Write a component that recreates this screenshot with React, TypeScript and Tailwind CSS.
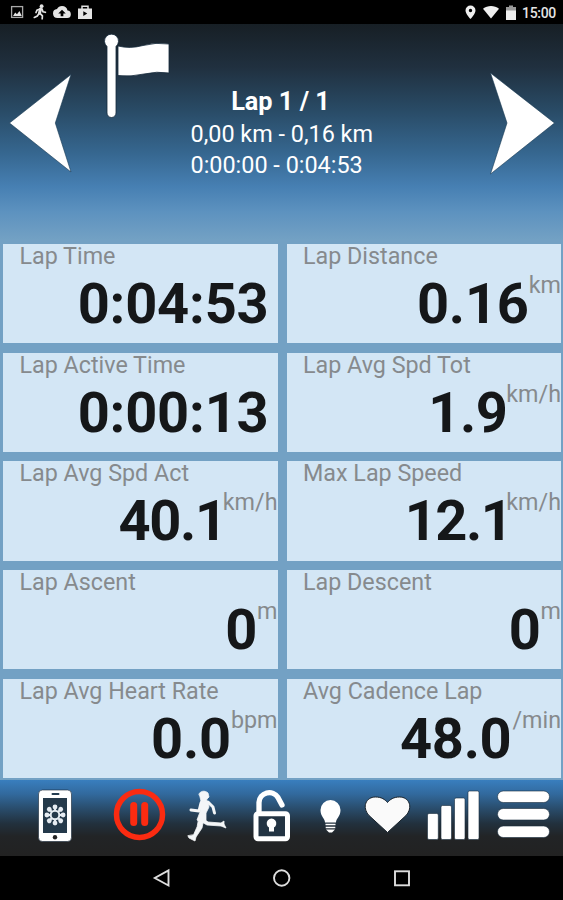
import React from "react";

type Metric = { label: string; value: string; unit?: string; fit?: string };

const metrics: Metric[] = [
  { label: "Lap Time", value: "0:04:53" },
  { label: "Lap Distance", value: "0.16", unit: "km" },
  { label: "Lap Active Time", value: "0:00:13" },
  { label: "Lap Avg Spd Tot", value: "1.9", unit: "km/h", fit: "-mr-[1px] tracking-[-0.5px]" },
  { label: "Lap Avg Spd Act", value: "40.1", unit: "km/h", fit: "-mr-[3px] tracking-[-1.3px]" },
  { label: "Max Lap Speed", value: "12.1", unit: "km/h", fit: "-mr-[5px] tracking-[-1.5px]" },
  { label: "Lap Ascent", value: "0", unit: "m" },
  { label: "Lap Descent", value: "0", unit: "m" },
  { label: "Lap Avg Heart Rate", value: "0.0", unit: "bpm" },
  { label: "Avg Cadence Lap", value: "48.0", unit: "/min", fit: "mr-[1px] tracking-[-0.3px]" },
];

function StatusBar() {
  return (
    <div className="flex h-6 items-center justify-between bg-black pl-[10px] pr-[7px] text-[#e4e4e4]">
      <div className="flex items-center">
        <svg className="h-[14px] w-[14px]" viewBox="0 0 14 14">
          <rect x="1.6" y="1.6" width="11" height="10.8" fill="none" stroke="#a9a9a9" strokeWidth="1.3" />
          <path d="M3 11l2.2-3.500 1.800 1.800 2.400-3.200 2.400 4.900z" fill="#e4e4e4" />
        </svg>
        <svg className="ml-[9px] h-4 w-[14px]" viewBox="0 0 14 16" fill="none" stroke="#e4e4e4" strokeLinecap="round">
          <circle cx="8.6" cy="2.2" r="1.9" fill="#e4e4e4" stroke="none" />
          <path d="M7.6 5L6.5 9.2" strokeWidth="3" />
          <path d="M7 5L4 6.2 3 8.5M9 5l1 2.7 2.4.6M6.3 9l-2 3-3 1.4M7 9.3l2.4 2.5-.2 3" strokeWidth="1.7" />
        </svg>
        <svg className="ml-[6px] h-[14px] w-[18px]" viewBox="0 0 24 18" fill="#e4e4e4">
          <path fillRule="evenodd" d="M19.35 7.04A7.49 7.49 0 0 0 12 1C9.11 1 6.6 2.64 5.35 5.04A6 6 0 0 0 6 17h13a5 5 0 0 0 .35-9.96zM13.800 11v3.500h-3.600V11H7L12 6l5 5z" />
        </svg>
        <svg className="ml-[6px] h-[15px] w-[16px]" viewBox="0 0 16 15">
          <path d="M5 4V1.300h6V4" fill="none" stroke="#e4e4e4" strokeWidth="1.5" />
          <path fillRule="evenodd" d="M1 3.500h14v10.500H1zM6.300 6.300v4.600l4-2.300z" fill="#e4e4e4" />
        </svg>
      </div>
      <div className="flex items-center">
        <svg className="h-[14px] w-[11px]" viewBox="0 0 11 14">
          <path fillRule="evenodd" fill="#eee" d="M5.5.5A5 5 0 0 0 .5 5.500C.5 9 5.500 14 5.500 14s5-5 5-8.500a5 5 0 0 0-5-5zm0 3.300a1.700 1.700 0 1 1 0 3.400 1.700 1.700 0 0 1 0-3.400z" />
        </svg>
        <svg className="ml-[7px] h-[14px] w-[16px]" viewBox="0 0 16 14">
          <path fill="#eee" d="M8 13.500L0 3.700C4.500.2 11.500.2 16 3.700z" />
        </svg>
        <svg className="ml-[7px] h-[15px] w-[10px]" viewBox="0 0 10 15">
          <path fill="#999" d="M0 2h3V.5h4V2h3v5H0z" />
          <path fill="#eee" d="M0 5.500h10V15H0z" />
        </svg>
        <span className="ml-[6px] mt-[2px] text-[14px] font-medium leading-4 tracking-[-0.3px]">15:00</span>
      </div>
    </div>
  );
}

function Header() {
  return (
    <header className="flex h-[216px] bg-[linear-gradient(to_bottom,#171f25_0%,#20303f_20%,#294b66_40%,#366790_60%,#467fb2_75%,#5d92bf_87%,#73a1c4_100%)] text-white">
      <svg className="h-full w-[190px]" viewBox="0 24 190 216">
        <path d="M9.500 123L71 74.500 55.300 123 71 172z" fill="#fff" stroke="#183953" strokeWidth="0.600" />
        <g fill="#fff" stroke="#152a3b" strokeWidth="0.800">
          <path d="M118 46q12 3 25-0.500t26-1.500v29q-12-2-25 1t-26 1.500z" />
          <path d="M107 46.500a7 7 0 1 1 9 0V113a4.500 4.500 0 0 1-9 0z" />
        </g>
      </svg>
      <div className="w-[183px] whitespace-nowrap pt-[62px] text-[23.400px] leading-[31px]">
        <div className="pr-[2px] text-center text-[25.300px] font-bold">Lap 1 / 1</div>
        <div className="mt-[2px] pl-[0.500px]">0,00 km - 0,16 km</div>
        <div className="pl-[0.500px]">0:00:00 - 0:04:53</div>
      </div>
      <svg className="h-full w-[190px]" viewBox="373 24 190 216">
        <path d="M554.500 123L490.500 73 507 123 490.500 174z" fill="#fff" stroke="#183953" strokeWidth="0.600" />
      </svg>
    </header>
  );
}

function MetricCard({ label, value, unit, fit = "tracking-[-0.2px]" }: Metric) {
  return (
    <div className="bg-[#d3e6f5]">
      <div className="pl-[16.500px] text-[23.300px] leading-[25px] text-[#868a8d]">{label}</div>
      <div className="mt-[2px] flex justify-end whitespace-nowrap">
        <span className={`text-[56px] font-bold leading-[66px] text-[#151719] ${fit}`}>{value}</span>
        {unit ? (
          <span className="pt-px text-[23.300px] leading-[26px] text-[#868a8d]">{unit}</span>
        ) : (
          <span className="w-[9px]" />
        )}
      </div>
    </div>
  );
}

const petals = [0, 45, 90, 135, 180, 225, 270, 315];

function Toolbar() {
  return (
    <div className="h-[76px] bg-[linear-gradient(to_bottom,#397ebe_0%,#326a9e_18%,#294c6b_38%,#22313e_57%,#222426_74%,#222_100%)]">
      <svg className="h-[76px] w-[563px]" viewBox="0 780 563 76">
        <g>
          <rect x="38.500" y="790" width="33" height="51.500" rx="4" fill="#fff" stroke="#152536" strokeWidth="0.600" />
          <rect x="43" y="798" width="24" height="35" fill="#24394a" />
          <rect x="51.500" y="793" width="8" height="2" rx="1" fill="#223b50" />
          <circle cx="55" cy="837.300" r="2.200" fill="#222" />
          <circle cx="55" cy="815" r="4.300" fill="none" stroke="#e6ecf2" strokeWidth="2" />
          {petals.map((a) => (
            <g key={a} transform={`rotate(${a} 55 815)`}>
              <path d="M55 811v-4" stroke="#e6ecf2" strokeWidth="2.200" />
              <circle cx="55" cy="806.900" r="2.400" fill="#e6ecf2" />
            </g>
          ))}
        </g>
        <circle cx="139.500" cy="814.500" r="23" fill="none" stroke="#fb2b11" strokeWidth="5.500" />
        <path d="M133.700 805.500v17M144.700 805.500v17" stroke="#fb2b11" strokeWidth="7" strokeLinecap="round" />
        <g fill="#f4f6f8" stroke="#f4f6f8" strokeLinejoin="round" strokeLinecap="round" strokeWidth="0.800">
          <path d="M199 794c1-3 6-4 9-1l1 4-2 2-1 3-5-1-1-4z" />
          <path d="M201 801l7 0 1 6-3 6 0 7-4 3-5-3 3-8z" />
          <path d="M201 803l-2 8-8-1M208 802l5 5 1.500 6" fill="none" strokeWidth="3" />
          <path d="M199 818l5 0-2 10-6 9-3-1 4-9zM203 818l5 4 13 1 3-2 0 3 2 4-5-2-14-1-7-4z" />
          <path d="M193 835l3 2-1 4-6-3-1-2z" />
        </g>
        <g>
          <path d="M259 811V802.500A10.300 10.300 0 0 1 278 797.500L282 805" fill="none" stroke="#fff" strokeWidth="5.300" strokeLinecap="round" />
          <rect x="256" y="813.700" width="31.500" height="25" rx="2" fill="#223342" stroke="#fff" strokeWidth="5" />
          <path d="M269 827.500a4.800 4.800 0 1 1 5 0v4h-5z" fill="#fff" />
        </g>
        <g>
          <path d="M325 822.500c0-4-4.500-6-4.500-12.500a10 10 0 0 1 20 0c0 6.500-4.500 8.500-4.500 12.500z" fill="#fff" />
          <path d="M325.500 824.500h10M325.700 827.500h9.600" stroke="#fff" strokeWidth="1.700" />
          <path d="M326 829.500h9l-3 3h-3z" fill="#fff" />
        </g>
        <path d="M387.500 832.500L369 815.500C361.500 807 366 797 375.500 797c6 0 9.500 2.500 12 5.500 2.500-3 6-5.500 12-5.500 9.500 0 14 10 6.500 18.500z" fill="#fafafa" stroke="#17212a" strokeWidth="1" />
        <g fill="#fff" stroke="#172b3d" strokeWidth="0.600">
          <rect x="427.500" y="813.500" width="10.800" height="26" rx="1.500" />
          <rect x="441" y="805.500" width="10.500" height="34" rx="1.500" />
          <rect x="454.500" y="798" width="10.500" height="41.500" rx="1.500" />
          <rect x="468" y="791" width="11" height="48.500" rx="1.500" />
          <rect x="497.500" y="791" width="52" height="11.500" rx="5.700" />
          <rect x="497.500" y="808.500" width="52" height="11.500" rx="5.700" />
          <rect x="497.500" y="826" width="52" height="11.500" rx="5.700" />
        </g>
      </svg>
    </div>
  );
}

function NavBar() {
  return (
    <div className="h-11 bg-black">
      <svg className="h-11 w-[563px]" viewBox="0 856 563 44" fill="none" stroke="#dedede" strokeWidth="1.900">
        <path d="M168.500 870.300v15.200L154.800 878z" />
        <circle cx="281.700" cy="878" r="7.700" />
        <rect x="395" y="871.300" width="14" height="14" />
      </svg>
    </div>
  );
}

export default function App() {
  return (
    <main className="flex h-[900px] w-[563px] flex-col bg-black font-['Roboto',sans-serif]">
      <StatusBar />
      <Header />
      <section className="grid h-[540px] grid-cols-[274.500px_274.500px] grid-rows-5 gap-x-[9px] gap-y-[9.500px] bg-[#73a1c4] pb-[2px] pl-[3px] pt-[4px]">
        {metrics.map((m) => (
          <MetricCard key={m.label} {...m} />
        ))}
      </section>
      <Toolbar />
      <NavBar />
    </main>
  );
}
